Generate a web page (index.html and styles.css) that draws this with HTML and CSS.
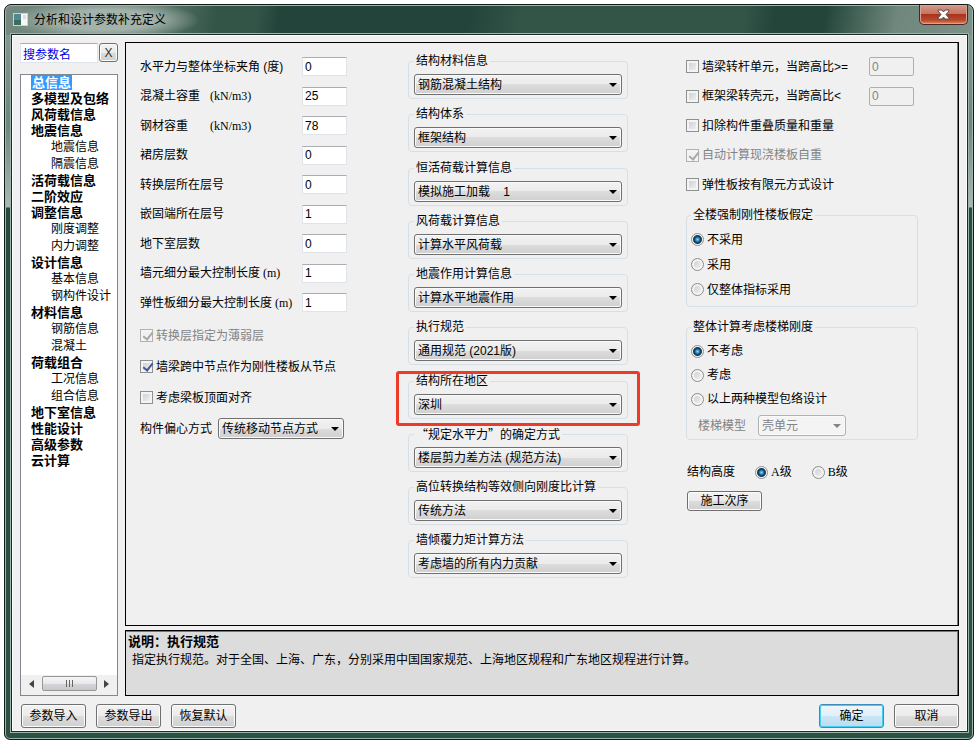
FILE: index.html
```html
<!DOCTYPE html>
<html lang="zh-CN">
<head>
    <meta charset="UTF-8">
    <title>分析和设计参数补充定义</title>
    <link rel="stylesheet" href="styles.css">
</head>
<body>
<div class="window">
    <header class="titlebar">
        <svg class="app-icon" width="15" height="13" viewBox="0 0 15 13">
            <rect x="0.5" y="0.5" width="14" height="12" fill="#f6f8f8" stroke="#c6d2d0"/>
            <rect x="1" y="1" width="7" height="11" fill="#4f8a94"/>
            <rect x="1" y="7" width="7" height="5" fill="#3d6b60"/>
            <path d="M10 3h3M10 5h3" stroke="#b9c4cc"/>
        </svg>
        <h1>分析和设计参数补充定义</h1>
        <button class="close" type="button" aria-label="关闭">
            <svg width="13" height="11" viewBox="0 0 13 11">
                <path d="M1 1h4l1.500 2L8 1h4v1L9 5.500 12 9v1H8L6.500 8 5 10H1V9l3-3.500L1 2z" fill="#fff" stroke="#5d4b4b" stroke-width="1"/>
            </svg>
        </button>
    </header>

    <main class="client">
        <div class="work">
            <aside class="side">
                <div class="search">
                    <input type="text" value="搜参数名" aria-label="搜参数名">
                    <button type="button">X</button>
                </div>
                <nav class="tree">
                    <ul>
                        <li><a class="active" href="#">总信息</a></li>
                        <li><a href="#">多模型及包络</a></li>
                        <li><a href="#">风荷载信息</a></li>
                        <li><a href="#">地震信息</a></li>
                        <li class="sub"><a href="#">地震信息</a></li>
                        <li class="sub"><a href="#">隔震信息</a></li>
                        <li><a href="#">活荷载信息</a></li>
                        <li><a href="#">二阶效应</a></li>
                        <li><a href="#">调整信息</a></li>
                        <li class="sub"><a href="#">刚度调整</a></li>
                        <li class="sub"><a href="#">内力调整</a></li>
                        <li><a href="#">设计信息</a></li>
                        <li class="sub"><a href="#">基本信息</a></li>
                        <li class="sub"><a href="#">钢构件设计</a></li>
                        <li><a href="#">材料信息</a></li>
                        <li class="sub"><a href="#">钢筋信息</a></li>
                        <li class="sub"><a href="#">混凝土</a></li>
                        <li><a href="#">荷载组合</a></li>
                        <li class="sub"><a href="#">工况信息</a></li>
                        <li class="sub"><a href="#">组合信息</a></li>
                        <li><a href="#">地下室信息</a></li>
                        <li><a href="#">性能设计</a></li>
                        <li><a href="#">高级参数</a></li>
                        <li><a href="#">云计算</a></li>
                    </ul>
                    <div class="scrollbar">
                        <svg width="5" height="8" viewBox="0 0 5 8"><path d="M5 0v8L0 4z" fill="#444"/></svg>
                        <div class="thumb"><i></i><i></i><i></i></div>
                        <svg width="5" height="8" viewBox="0 0 5 8"><path d="M0 0v8l5-4z" fill="#444"/></svg>
                    </div>
                </nav>
            </aside>

            <div class="content">
                <form class="panel">
                    <div class="col basic">
                        <div class="fields">
                            <label for="angle">水平力与整体坐标夹角 (度)</label><input id="angle" type="text" value="0">
                            <label for="conc"><span class="name">混凝土容重</span><span class="unit">(kN/m3)</span></label><input id="conc" type="text" value="25">
                            <label for="steel"><span class="name">钢材容重</span><span class="unit">(kN/m3)</span></label><input id="steel" type="text" value="78">
                            <label for="podium">裙房层数</label><input id="podium" type="text" value="0">
                            <label for="transfer">转换层所在层号</label><input id="transfer" type="text" value="0">
                            <label for="fixed">嵌固端所在层号</label><input id="fixed" type="text" value="1">
                            <label for="basement">地下室层数</label><input id="basement" type="text" value="0">
                            <label for="wall">墙元细分最大控制长度<span class="unit"> (m)</span></label><input id="wall" type="text" value="1">
                            <label for="slab">弹性板细分最大控制长度<span class="unit"> (m)</span></label><input id="slab" type="text" value="1">
                        </div>
                        <div class="checks">
                            <label class="off"><input type="checkbox" checked disabled>转换层指定为薄弱层</label>
                            <label><input type="checkbox" checked>墙梁跨中节点作为刚性楼板从节点</label>
                            <label><input type="checkbox">考虑梁板顶面对齐</label>
                            <div class="inline">
                                <label for="offset">构件偏心方式</label>
                                <span class="select"><select id="offset"><option>传统移动节点方式</option></select></span>
                            </div>
                        </div>
                    </div>

                    <div class="col groups">
                        <div class="cell">
                            <fieldset><legend>结构材料信息</legend>
                                <span class="select"><select aria-label="结构材料信息"><option>钢筋混凝土结构</option></select></span>
                            </fieldset>
                        </div>
                        <div class="cell">
                            <fieldset><legend>结构体系</legend>
                                <span class="select"><select aria-label="结构体系"><option>框架结构</option></select></span>
                            </fieldset>
                        </div>
                        <div class="cell">
                            <fieldset><legend>恒活荷载计算信息</legend>
                                <span class="select"><select aria-label="恒活荷载计算信息"><option>模拟施工加载&nbsp;&nbsp;&nbsp;&nbsp;1</option></select></span>
                            </fieldset>
                        </div>
                        <div class="cell">
                            <fieldset><legend>风荷载计算信息</legend>
                                <span class="select"><select aria-label="风荷载计算信息"><option>计算水平风荷载</option></select></span>
                            </fieldset>
                        </div>
                        <div class="cell">
                            <fieldset><legend>地震作用计算信息</legend>
                                <span class="select"><select aria-label="地震作用计算信息"><option>计算水平地震作用</option></select></span>
                            </fieldset>
                        </div>
                        <div class="cell">
                            <fieldset><legend>执行规范</legend>
                                <span class="select"><select aria-label="执行规范"><option>通用规范 (2021版)</option></select></span>
                            </fieldset>
                        </div>
                        <div class="cell marked">
                            <fieldset><legend>结构所在地区</legend>
                                <span class="select"><select aria-label="结构所在地区"><option>深圳</option></select></span>
                            </fieldset>
                        </div>
                        <div class="cell">
                            <fieldset><legend class="cjk">“规定水平力”的确定方式</legend>
                                <span class="select"><select aria-label="规定水平力的确定方式"><option>楼层剪力差方法 (规范方法)</option></select></span>
                            </fieldset>
                        </div>
                        <div class="cell">
                            <fieldset><legend>高位转换结构等效侧向刚度比计算</legend>
                                <span class="select"><select aria-label="高位转换结构等效侧向刚度比计算"><option>传统方法</option></select></span>
                            </fieldset>
                        </div>
                        <div class="cell">
                            <fieldset><legend>墙倾覆力矩计算方法</legend>
                                <span class="select"><select aria-label="墙倾覆力矩计算方法"><option>考虑墙的所有内力贡献</option></select></span>
                            </fieldset>
                        </div>
                    </div>

                    <div class="col extra">
                        <div class="rules">
                            <div class="rule">
                                <label><input type="checkbox">墙梁转杆单元，当跨高比&gt;=</label>
                                <input type="text" value="0" aria-label="墙梁跨高比" disabled>
                            </div>
                            <div class="rule">
                                <label><input type="checkbox">框架梁转壳元，当跨高比&lt;</label>
                                <input type="text" value="0" aria-label="框架梁跨高比" disabled>
                            </div>
                            <label><input type="checkbox">扣除构件重叠质量和重量</label>
                            <label class="off"><input type="checkbox" checked disabled>自动计算现浇楼板自重</label>
                            <label><input type="checkbox">弹性板按有限元方式设计</label>
                        </div>
                        <fieldset class="rigid"><legend>全楼强制刚性楼板假定</legend>
                            <label><input type="radio" name="rigid" checked>不采用</label>
                            <label><input type="radio" name="rigid">采用</label>
                            <label><input type="radio" name="rigid">仅整体指标采用</label>
                        </fieldset>
                        <fieldset class="stairs"><legend>整体计算考虑楼梯刚度</legend>
                            <label><input type="radio" name="stairs" checked>不考虑</label>
                            <label><input type="radio" name="stairs">考虑</label>
                            <label><input type="radio" name="stairs">以上两种模型包络设计</label>
                            <div class="inline model">
                                <label class="off" for="model">楼梯模型</label>
                                <span class="select off"><select id="model" disabled><option>壳单元</option></select></span>
                            </div>
                        </fieldset>
                        <div class="grade">
                            <span>结构高度</span>
                            <label><input type="radio" name="grade" checked><span class="unit">A级</span></label>
                            <label><input type="radio" name="grade"><span class="unit">B级</span></label>
                        </div>
                        <button class="order" type="button">施工次序</button>
                    </div>
                </form>

                <section class="note">
                    <h2>说明：执行规范</h2>
                    <p>指定执行规范。对于全国、上海、广东，分别采用中国国家规范、上海地区规程和广东地区规程进行计算。</p>
                </section>
            </div>
        </div>

        <footer class="actions">
            <button type="button">参数导入</button>
            <button type="button">参数导出</button>
            <button type="button">恢复默认</button>
            <button class="ok" type="button">确定</button>
            <button type="button">取消</button>
        </footer>
    </main>
</div>
</body>
</html>
```
FILE: styles.css
```css
*{ box-sizing: border-box;}
body,h1,h2,p,ul,fieldset,legend,input{ margin: 0;padding: 0;}
body{
    min-height: 100vh;
    padding: 4px 0 0 4px;
    display: flex;
    background: #fff;
    color: #000;
    font: 12px/16px "Liberation Sans","Noto Sans CJK SC",sans-serif;
}
button,input,select{ font: inherit;color: inherit;}
ul{ list-style: none;}
a{ color: inherit;text-decoration: none;}

/* window frame */
.window{
    flex: 1;
    display: flex;
    flex-direction: column;
    padding: 0 5px 7px 6px;
    border: 1px solid #111a17;
    border-radius: 7px 7px 6px 6px;
    box-shadow: inset 0 0 0 1px #9db5ab;
    background:
        radial-gradient(ellipse 95px 20px at 100px 15px,#a3b3ab 50%,transparent) no-repeat,
        linear-gradient(100deg,#74897f 0,#5d786d 150px,#335548 210px,#335548 250px,#23443a 272px,#23443a 460px,#335548 510px,#335548 730px,#24463a 760px,#24463a 810px,#6f877d 880px,#7d9188 100%) 0 0/100% 30px no-repeat,
        linear-gradient(#8a9e95,#6d877c 120px,#a9bab3 202px,#264a3c 203px,#2c5042);
}
.titlebar{
    display: flex;
    align-items: center;
    height: 29px;
    padding-left: 2px;
}
.app-icon{ margin-right: 6px;}
.titlebar h1{
    flex: 1;
    font-size: 12px;
    font-weight: normal;
}
.close{
    align-self: flex-start;
    display: flex;
    align-items: center;
    justify-content: center;
    width: 49px;
    height: 20px;
    padding: 0;
    border: 1px solid #4e2620;
    border-top: 0;
    border-radius: 0 0 5px 5px;
    box-shadow: inset 0 0 0 1px #d9a294;
    background: linear-gradient(#d59a8b,#c4725e 48%,#a8341b 50%,#b9492d 80%,#d98a66);
}

.client{
    flex: 1;
    display: flex;
    flex-direction: column;
    padding: 7px 8px 3px;
    border: 1px solid #1b2a25;
    outline: 1px solid #9db5ab;
    box-shadow: inset 0 0 0 1px #fff;
    background: #f0f0f0;
}
.work{
    flex: 1;
    display: grid;
    grid-template-columns: 98px 1fr;
    column-gap: 7px;
}

/* buttons */
.actions button,.order,.search button{
    border: 1px solid #707070;
    border-radius: 3px;
    padding: 0;
    box-shadow: inset 0 0 0 1px #fcfcfc;
    background: linear-gradient(#f2f2f2,#ebebeb 50%,#dddddd 50%,#cfcfcf);
}
.actions{
    display: flex;
    gap: 10px;
    margin-top: 8px;
    padding-left: 1px;
}
.actions button{ width: 65px;height: 24px;}
.actions .ok{
    margin-left: auto;
    border-color: #3c8dbc;
    box-shadow: inset 0 0 0 1px #46cdf5;
    background: linear-gradient(#eef6fb,#e0f0f9 50%,#cbe6f5 50%,#b9dcf0);
}

/* text boxes */
input[type=text]{
    width: 45px;
    height: 19px;
    padding-left: 2px;
    border: 1px solid #dfe4ea;
    border-top-color: #abadb3;
    background: #fff;
}
input[type=text]:disabled{
    border: 1px solid #afafaf;
    border-radius: 2px;
    background: #f0f0f0;
    color: #838383;
}

/* drop-downs */
.select{ position: relative;display: block;}
.select select{
    display: block;
    appearance: none;
    width: 100%;
    height: 21px;
    padding: 0 18px 0 3px;
    border: 1px solid #707070;
    border-radius: 3px;
    box-shadow: inset 0 0 0 1px #fafafa;
    background: linear-gradient(#f2f2f2,#ebebeb 50%,#dddddd 50%,#cfcfcf);
}
.select::after{
    content: "";
    position: absolute;
    top: 9px;
    right: 5px;
    border: 4px solid transparent;
    border-top-color: #000;
    border-bottom: 0;
    pointer-events: none;
}
.select.off select{
    border-color: #adb2b5;
    background: #f4f4f4;
    color: #838383;
    opacity: 1;
}
.select.off::after{ border-top-color: #838383;}
.off{ color: #838383;}

/* tick boxes and radios */
input[type=checkbox],input[type=radio]{
    appearance: none;
    flex: none;
    width: 13px;
    height: 13px;
    border: 1px solid #8e8f8f;
    background: linear-gradient(135deg,#c6cbd0,#f6f6f6);
    box-shadow: inset 0 0 0 2px #f4f4f4;
}
input[type=radio]{ border-radius: 50%;}
input[type=checkbox]:checked::after{
    content: "";
    display: block;
    width: 4px;
    height: 8px;
    margin: 0 0 0 4px;
    border: solid #41579a;
    border-width: 0 2px 2px 0;
    transform: rotate(38deg);
}
input[type=checkbox]:disabled{ border-color: #b1b1b1;background: #f0f0f0;}
input[type=checkbox]:disabled::after{ border-color: #a8a8a8;}
input[type=radio]:checked{
    background: radial-gradient(circle at 50% 50%,#8fdcf8 0,#2a7fb5 2px,#163f66 3px,#163f66 4px,#f4f4f4 5px);
    box-shadow: none;
}
.checks label,.rules label,.extra fieldset label,.grade label{
    display: flex;
    align-items: center;
    gap: 3px;
}

/* left side */
.side{ display: flex;flex-direction: column;padding-top: 1px;}
.search{ display: flex;gap: 1px;margin-bottom: 11px;}
.search input[type=text]{ flex: 1;width: 0;height: 20px;color: #0000e6;}
.search button{ width: 19px;height: 19px;color: #333;}
.tree{
    flex: 1;
    display: flex;
    flex-direction: column;
    border: 1px solid #828790;
    background: #fff;
}
.tree ul{ flex: 1;padding-left: 10px;}
.tree li{
    font-size: 13px;
    font-weight: bold;
    line-height: 16px;
    white-space: nowrap;
}
.tree .sub{
    padding-left: 20px;
    font-size: 12px;
    font-weight: normal;
    line-height: 17px;
}
.tree .active{
    display: inline-block;
    padding: 0 1px;
    background: #3399ff;
    color: #fff;
    line-height: 15px;
}
.scrollbar{
    display: flex;
    align-items: center;
    justify-content: space-between;
    height: 20px;
    padding: 0 8px 3px;
    background: #f0f0f0;
}
.thumb{
    display: flex;
    align-items: center;
    justify-content: center;
    gap: 2px;
    width: 55px;
    height: 15px;
    border: 1px solid #979797;
    border-radius: 2px;
    background: linear-gradient(#f5f5f5,#e9e9eb 50%,#d6d6d9 50%,#c8c8cc);
}
.thumb i{ width: 1px;height: 7px;background: #666;}

/* parameter page */
.content{ display: flex;flex-direction: column;gap: 4px;}
.panel{
    flex: 1;
    display: grid;
    grid-template-columns: 268fr 278fr 272fr;
    padding: 9px 0 0 14px;
    border: 1px solid #000;
    box-shadow: inset -1px 0 0 #777;
}
.basic{ padding-right: 61px;}
.fields{
    display: grid;
    grid-template-columns: 1fr 45px;
    grid-auto-rows: 29px 30px;
    align-items: center;
    white-space: nowrap;
}
.name{ display: inline-block;width: 70px;}
.unit{ font-family: "Liberation Serif","Noto Sans CJK SC",serif;}
.cjk{ font-family: "Noto Sans CJK SC",sans-serif;}
.checks{
    display: grid;
    grid-auto-rows: 31px;
    margin-top: 3px;
    white-space: nowrap;
}
.inline{ display: flex;align-items: center;gap: 6px;}
.inline .select{ flex: none;width: 126px;}

fieldset{
    min-width: 0;
    padding: 5px 5px 4px;
    border: 1px solid #d5dfe5;
    border-radius: 4px;
}
legend{ padding: 0 2px;}
.groups{
    display: grid;
    grid-auto-rows: 53px 54px 53px 53px;
    align-content: start;
    padding: 1px 58px 0 0;
}
.cell{ position: relative;}
.cell fieldset{ height: 46px;}
.marked::after{
    content: "";
    position: absolute;
    inset: -2px -12px 0;
    border: 3px solid #ee3a28;
    border-radius: 3px;
    pointer-events: none;
}

.extra{ padding-right: 40px;}
.rules{
    display: grid;
    grid-auto-rows: 29px 30px;
    white-space: nowrap;
}
.rule{
    display: flex;
    align-items: center;
    justify-content: space-between;
    padding-right: 4px;
}
.extra fieldset{ display: grid;padding: 4px;}
.rigid{ grid-auto-rows: 25px;margin-top: 8px;}
.stairs{ grid-auto-rows: 24px;margin-top: 12px;}
.model{ gap: 12px;padding-left: 7px;margin-top: 5px;}
.inline.model .select{ width: 88px;}
.grade{
    display: flex;
    align-items: center;
    gap: 20px;
    height: 20px;
    margin-top: 22px;
    padding-left: 1px;
}
.order{ width: 75px;height: 20px;margin: 9px 0 0 1px;}

.note{
    min-height: 66px;
    padding: 2px;
    border: 1px solid #000;
    box-shadow: inset -1px 1px 0 #777;
    background: #dcdcdc;
}
.note h2{ font-size: 13px;line-height: 18px;}
.note p{ padding-left: 4px;line-height: 18px;}
```
